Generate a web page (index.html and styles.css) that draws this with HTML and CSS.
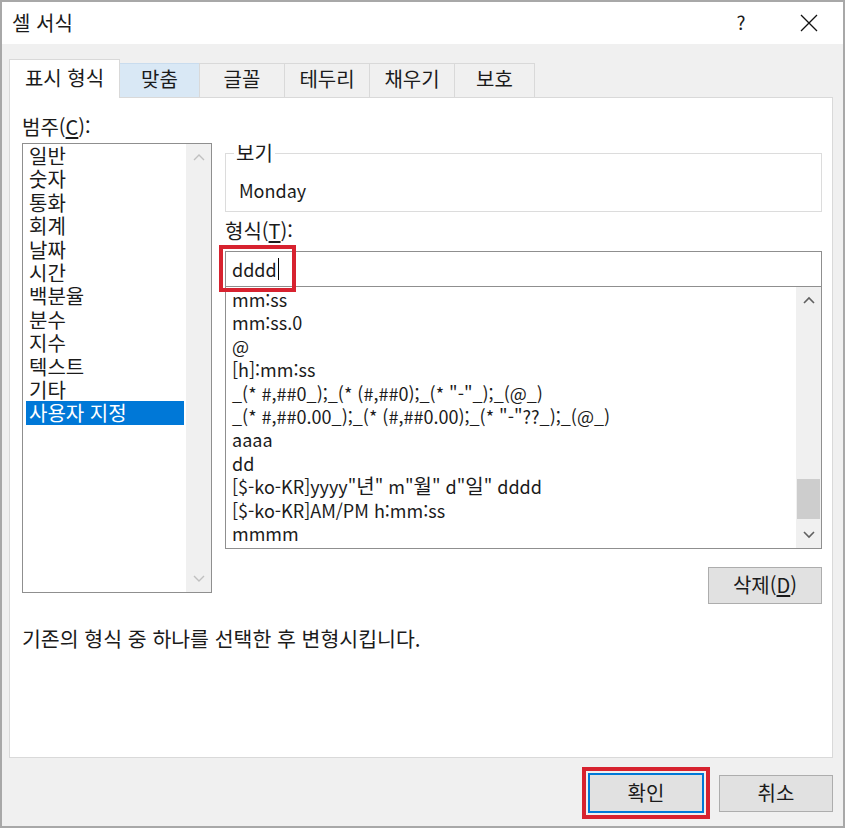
FILE: index.html
```html
<!DOCTYPE html>
<html lang="ko">
<head>
  <meta charset="UTF-8">
  <title>셀 서식</title>
  <link rel="stylesheet" href="styles.css">
</head>
<body>
  <div class="dialog">
    <div class="titlebar">
      <span class="title">셀 서식</span>
      <span class="help">?</span>
      <span class="close">
        <svg width="20" height="20" viewBox="0 0 20 20"><path d="M2 2 L18 18 M18 2 L2 18" stroke="#111" stroke-width="1.3" fill="none"/></svg>
      </span>
    </div>

    <div class="content">
      <div class="tabs">
        <div class="tab active">표시 형식</div>
        <div class="tab hover">맞춤</div>
        <div class="tab">글꼴</div>
        <div class="tab">테두리</div>
        <div class="tab">채우기</div>
        <div class="tab">보호</div>
      </div>

      <div class="panel">
        <div class="columns">
          <div class="category">
            <div class="label">범주(<u>C</u>):</div>
            <div class="listbox cat-list">
              <ul class="items">
                <li>일반</li>
                <li>숫자</li>
                <li>통화</li>
                <li>회계</li>
                <li>날짜</li>
                <li>시간</li>
                <li>백분율</li>
                <li>분수</li>
                <li>지수</li>
                <li>텍스트</li>
                <li>기타</li>
                <li class="selected">사용자 지정</li>
              </ul>
              <div class="scrollbar disabled">
                <span class="arrow"><svg width="12" height="8" viewBox="0 0 12 8"><path d="M1 7 L6 2 L11 7" fill="none" stroke="currentColor" stroke-width="1.4"/></svg></span>
                <span class="track"></span>
                <span class="arrow"><svg width="12" height="8" viewBox="0 0 12 8"><path d="M1 1 L6 6 L11 1" fill="none" stroke="currentColor" stroke-width="1.4"/></svg></span>
              </div>
            </div>
          </div>

          <div class="format">
            <fieldset class="sample">
              <legend>보기</legend>
              <div class="sample-text">Monday</div>
            </fieldset>

            <div class="label type-label">형식(<u>T</u>):</div>
            <div class="input-wrap">
              <div class="input">dddd<span class="caret"></span></div>
              <span class="mark"></span>
            </div>

            <div class="listbox fmt-list">
              <ul class="items">
                <li>mm:ss</li>
                <li>mm:ss.0</li>
                <li>@</li>
                <li>[h]:mm:ss</li>
                <li>_(* #,##0_);_(* (#,##0);_(* "-"_);_(@_)</li>
                <li>_(* #,##0.00_);_(* (#,##0.00);_(* "-"??_);_(@_)</li>
                <li>aaaa</li>
                <li>dd</li>
                <li>[$-ko-KR]yyyy"<span class="ko">년</span>" m"<span class="ko">월</span>" d"<span class="ko">일</span>" dddd</li>
                <li>[$-ko-KR]AM/PM h:mm:ss</li>
                <li>mmmm</li>
              </ul>
              <div class="scrollbar">
                <span class="arrow"><svg width="12" height="8" viewBox="0 0 12 8"><path d="M1 7 L6 2 L11 7" fill="none" stroke="currentColor" stroke-width="1.6"/></svg></span>
                <span class="track"></span>
                <span class="thumb"></span>
                <span class="arrow"><svg width="12" height="8" viewBox="0 0 12 8"><path d="M1 1 L6 6 L11 1" fill="none" stroke="currentColor" stroke-width="1.6"/></svg></span>
              </div>
            </div>

            <div class="actions">
              <button class="btn">삭제(<u>D</u>)</button>
            </div>
          </div>
        </div>

        <p class="hint">기존의 형식 중 하나를 선택한 후 변형시킵니다.</p>
      </div>

      <div class="footer">
        <span class="mark-btn"><button class="btn primary">확인</button></span>
        <button class="btn">취소</button>
      </div>
    </div>
  </div>
</body>
</html>
```

FILE: styles.css
```css
* {
  box-sizing: border-box;
}
body {
  margin: 0;
  font-family: "Noto Sans CJK KR", "Noto Sans", sans-serif;
  font-size: 20px;
  color: #1b1b1b;
  background: #fff;
}
u {
  text-underline-offset: 2px;
}

.dialog {
  width: 845px;
  height: 828px;
  border: 2px solid #a8a8a8;
  display: flex;
  flex-direction: column;
  background: #f0f0f0;
}

/* title bar */
.titlebar {
  height: 42px;
  flex-shrink: 0;
  background: #fff;
  display: flex;
  align-items: center;
  padding-left: 10px;
}
.title {
  flex: 1;
  padding-bottom: 2px;
}
.help,
.close {
  width: 46px;
  height: 42px;
  display: flex;
  align-items: center;
  justify-content: center;
}
.help {
  font-size: 19px;
  margin-right: 22px;
  padding-bottom: 3px;
}
.close {
  margin-right: 11px;
}

.content {
  flex: 1;
  display: flex;
  flex-direction: column;
  padding: 15px 10px 0 7px;
}

/* tabs */
.tabs {
  display: flex;
  align-items: flex-end;
  height: 38px;
}
.tab {
  height: 34px;
  margin-left: -1px;
  padding-bottom: 4px;
  border: 1px solid #d9d9d9;
  border-bottom: none;
  background: #f0f0f0;
  display: flex;
  align-items: center;
  justify-content: center;
  width: 86px;
}
.tab.active {
  width: 111px;
  height: 39px;
  margin-left: 0;
  margin-bottom: -1px;
  background: #fff;
  position: relative;
  z-index: 1;
}
.tab.hover {
  width: 81px;
  background: #d9e8f5;
  border-color: #c9dcee;
}
.tab:last-child {
  width: 81px;
}

/* page body */
.panel {
  height: 661px;
  border: 1px solid #d9d9d9;
  background: #fff;
  padding: 19px 10px 0 12px;
}
.columns {
  display: flex;
  gap: 13px;
}
.label {
  line-height: 20px;
}
.category {
  width: 190px;
}
.category .label {
  margin-bottom: 6px;
}

.listbox {
  border: 1px solid #8f8f8f;
  display: flex;
  background: #fff;
}
.items {
  flex: 1;
  list-style: none;
  margin: 0;
  padding: 0 2px 0 3px;
}
.items li {
  line-height: 23.4px;
  height: 23.4px;
  padding-left: 3px;
  white-space: nowrap;
}
.items li.selected {
  background: #0078d7;
  color: #fff;
}
.cat-list {
  height: 450px;
}

.scrollbar {
  width: 25px;
  background: #f0f0f0;
  display: flex;
  flex-direction: column;
  color: #606060;
}
.scrollbar.disabled {
  color: #c0c0c0;
}
.arrow {
  height: 26px;
  display: flex;
  align-items: center;
  justify-content: center;
}
.track {
  flex: 1;
}
.thumb {
  height: 40px;
  margin: 0 1px 3px;
  background: #cdcdcd;
}

/* right column */
.format {
  flex: 1;
  margin-top: 26px;
}
.sample {
  margin: 0;
  padding: 0 13px 0 13px;
  height: 69px;
  border: 1px solid #dcdcdc;
}
.sample legend {
  padding: 0 2px;
  margin-left: -5px;
  line-height: 20px;
}
.sample-text {
  font-size: 18px;
  line-height: 22px;
  margin-top: 16px;
}
.type-label {
  margin-top: 9px;
  margin-bottom: 10px;
}

.input-wrap {
  position: relative;
}
.input {
  height: 36px;
  border: 1px solid #8f8f8f;
  padding-left: 6px;
  font-size: 18px;
  display: flex;
  align-items: center;
}
.caret {
  width: 1px;
  height: 22px;
  background: #000;
  margin-left: 1px;
}
.mark {
  position: absolute;
  left: -6px;
  top: -6px;
  width: 77px;
  height: 47px;
  border: 4px solid #d7222f;
}

.fmt-list {
  height: 262px;
  border-top: none;
  font-size: 18px;
}
.fmt-list .items {
  padding: 1px 0 0 3px;
}
.fmt-list .ko {
  font-size: 20px;
  line-height: 1;
}

.actions {
  display: flex;
  justify-content: flex-end;
  margin-top: 18px;
}

.btn {
  font: inherit;
  color: #1b1b1b;
  height: 37px;
  width: 114px;
  background: #e1e1e1;
  border: 1px solid #adadad;
  padding: 0 0 2px;
}
.btn.primary {
  border: 2px solid #0078d7;
  width: 116px;
  height: 40px;
}

.hint {
  margin: 22px 0 0;
  font-size: 20.5px;
  line-height: 24px;
}

/* dialog buttons */
.footer {
  display: flex;
  justify-content: flex-end;
  align-items: center;
  gap: 9px;
  padding-top: 9px;
}
.mark-btn {
  display: flex;
  padding: 2px;
  border: 4px solid #d7222f;
}
```
